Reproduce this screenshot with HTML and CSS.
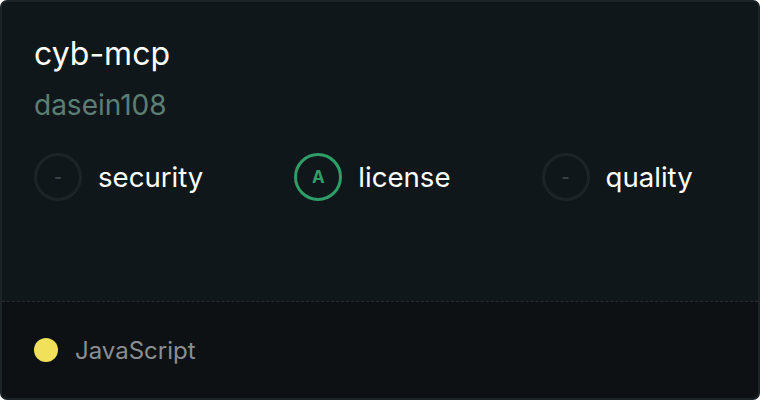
FILE: index.html
```html
<html lang="en">
	<head>
		<meta charset="UTF-8" />
		<meta name="viewport" content="width=device-width, initial-scale=1.0" />
		<title>cyb-mcp</title>
		<link rel="stylesheet" href="styles.css">
	</head>
	<body>
		<div class="card">
			<div class="card-main">
				<div class="repo-name">cyb-mcp</div>
				<div class="repo-owner">dasein108</div>
				<div class="scores">
					<div class="score">
						<div class="badge">-</div>
						<span class="score-label">security</span>
					</div>
					<div class="score">
						<div class="badge badge-a">A</div>
						<span class="score-label">license</span>
					</div>
					<div class="score">
						<div class="badge">-</div>
						<span class="score-label">quality</span>
					</div>
				</div>
			</div>
			<div class="card-footer">
				<span class="lang-dot"></span>
				<span class="lang-name">JavaScript</span>
			</div>
		</div>
	</body>
</html>
```

FILE: styles.css
```css
* {
	margin: 0;
	padding: 0;
	box-sizing: border-box;
}
body {
	width: 760px;
	height: 400px;
	background: #fff;
	font-family: Inter, "Noto Sans", sans-serif;
}

.card {
	display: flex;
	flex-direction: column;
	width: 760px;
	height: 400px;
	border: 2px solid #1d2427;
	border-radius: 7px;
	background-color: #10171a;
	overflow: hidden;
}

.card-main {
	flex: 1;
	padding: 34px 32px 0;
	border-bottom: 1px dashed #262d31;
}

.repo-name {
	font-size: 32px;
	line-height: 36px;
	color: #fff;
}

.repo-owner {
	margin-top: 16px;
	font-size: 28px;
	line-height: 34px;
	color: #5b7f74;
}

.scores {
	display: flex;
	gap: 91px;
	margin-top: 31px;
}

.score {
	display: flex;
	align-items: center;
	gap: 16px;
}

.badge {
	display: flex;
	align-items: center;
	justify-content: center;
	width: 48px;
	height: 48px;
	border: 3px solid #1c2427;
	border-radius: 50%;
	font-size: 17px;
	font-weight: 700;
	color: #3a4145;
}

.badge-a {
	border-color: #2f9d68;
	color: #2f9d68;
}

.score-label {
	font-size: 27.6px;
	color: #fff;
}

.card-footer {
	display: flex;
	align-items: center;
	gap: 17px;
	height: 96px;
	padding: 0 32px;
	background-color: #0d1114;
}

.lang-dot {
	width: 24px;
	height: 24px;
	border-radius: 50%;
	background-color: #f1e05a;
}

.lang-name {
	font-size: 24px;
	color: #8a8e91;
}
```
